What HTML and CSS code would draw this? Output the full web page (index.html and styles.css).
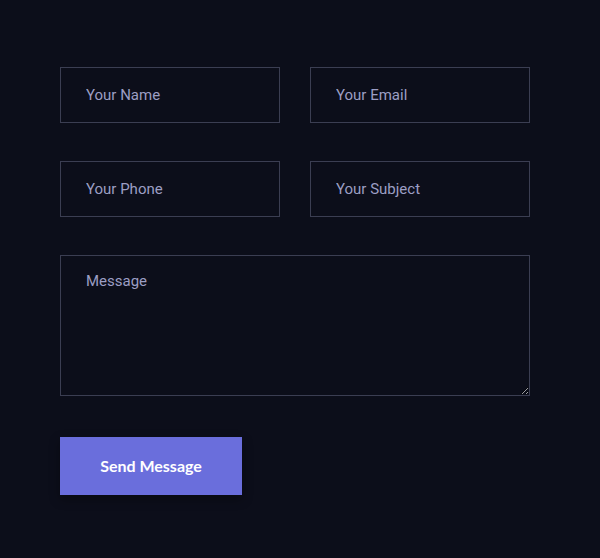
FILE: index.html
```html
<!DOCTYPE html>
<html lang="en">

<head>
    <meta charset="UTF-8">
    <meta name="viewport" content="width=device-width, initial-scale=1.0">
    <title>Contact</title>
    <link rel="stylesheet" href="styles.css">
</head>

<body>
    <form class="contact-form">
        <div class="row">
            <input type="text" class="field" placeholder="Your Name">
            <input type="email" class="field" placeholder="Your Email">
        </div>
        <div class="row">
            <input type="text" class="field" placeholder="Your Phone">
            <input type="text" class="field" placeholder="Your Subject">
        </div>
        <textarea class="field message" placeholder="Message"></textarea>
        <button type="submit">Send Message</button>
    </form>
</body>

</html>
```

FILE: styles.css
```css
body {
    margin: 0;
    padding: 0;
    background-color: #0c0e1a;
    font-family: Roboto, Arial, sans-serif;
    height: 558px;
}

.contact-form {
    width: 470px;
    padding: 67px 0 0 60px;
    display: flex;
    flex-direction: column;
    gap: 38px;
}

.row {
    display: grid;
    grid-template-columns: 220px 220px;
    gap: 30px;
}

.field {
    box-sizing: border-box;
    height: 56px;
    margin: 0;
    padding: 0 25px;
    background: transparent;
    border: 1px solid #3b3e52;
    border-radius: 0;
    color: #c8cae0;
    font-family: Roboto, Arial, sans-serif;
    font-size: 15px;
    outline: none;
}

.field::placeholder {
    color: #9c9ec4;
}

.message {
    width: 470px;
    height: 141px;
    padding: 16px 25px;
    resize: vertical;
}

button {
    width: 182px;
    height: 58px;
    margin-top: 3px;
    background-color: #6a6edc;
    color: #ffffff;
    border: none;
    border-radius: 0;
    font-family: Lato, Arial, sans-serif;
    font-weight: 700;
    font-size: 16px;
    padding-bottom: 2px;
    cursor: pointer;
    box-shadow: 0 4px 10px rgba(0, 0, 0, 0.35);
}
```
